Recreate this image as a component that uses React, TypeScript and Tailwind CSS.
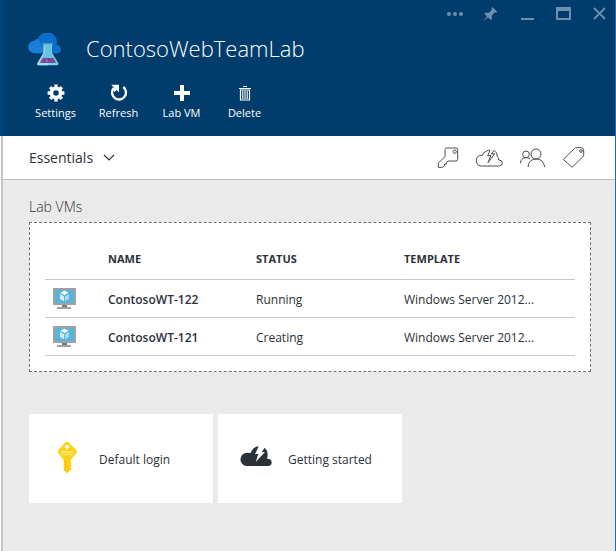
import React from "react";

function FlaskLogo() {
  return (
    <svg width="34" height="34" viewBox="86 98 102 102" aria-hidden="true">
      <path d="M106 159a17 17 0 0 1-1-38 14 14 0 0 1 12-6 28 28 0 0 1 53 20 12 12 0 0 1 3 24z" fill="#1c7ed6" />
      <path d="M117 113a28 28 0 0 1 53 22 12 12 0 0 1 3 24h-34z" fill="#0a6fc9" />
      <path d="M133 132h25v25l19 32q2 6-4 6h-55q-6 0-4-6l19-32z" fill="#7fd0e8" />
      <path d="M133 132h13v63h-28q-6 0-4-6l19-32z" fill="#a3dff0" />
      <path d="M130 129h30v6h-30z" fill="#59b4d9" />
      <path d="M136 135h20v23l17 29h-54l17-29z" fill="#6cc3e0" />
      <path d="M130 173h32l8 15h-48z" fill="#804998" />
      <circle cx="143" cy="182" r="3" fill="#a678b8" />
      <circle cx="149" cy="177" r="2" fill="#4b2467" />
    </svg>
  );
}

function GearIcon() {
  return (
    <svg width="18" height="18" viewBox="0 0 18 18" fill="none" stroke="#fff" aria-hidden="true">
      <circle cx="9" cy="9" r="4.6" strokeWidth="3.6" />
      <path d="M9 .6v3M9 14.400v3M.6 9h3M14.400 9h3M3.100 3.100l2 2M12.900 12.900l2 2M14.900 3.100l-2 2M5.100 12.900l-2 2" strokeWidth="3.400" />
    </svg>
  );
}

function RefreshIcon() {
  return (
    <svg width="18" height="18" viewBox="327 253 54 54" aria-hidden="true">
      <path d="M367 262a21 21 0 1 1-29 3" fill="none" stroke="#fff" strokeWidth="7" />
      <path d="M331 255h23v23l-7-7-7 6-6-7 5-6z" fill="#fff" />
    </svg>
  );
}

function PlusIcon() {
  return (
    <svg width="18" height="18" viewBox="0 0 18 18" aria-hidden="true">
      <path d="M7 1h4v6h6v4h-6v6H7v-6H1V7h6z" fill="#fff" />
    </svg>
  );
}

function TrashIcon() {
  return (
    <svg width="18" height="18" viewBox="0 0 18 18" fill="none" stroke="#fff" aria-hidden="true">
      <path d="M3 4.500h12M7 2.500h4" strokeWidth="1" />
      <path d="M4.500 6v10h9V6z" strokeWidth="1.200" />
      <path d="M6.800 7v8M9 7v8M11.200 7v8" strokeWidth="1.100" />
    </svg>
  );
}

const windowIcons = [
  {
    label: "More",
    icon: (
      <svg width="18" height="18" viewBox="0 0 18 18" fill="#6d8eac" aria-hidden="true">
        <circle cx="3" cy="9" r="2" />
        <circle cx="9" cy="9" r="2" />
        <circle cx="15" cy="9" r="2" />
      </svg>
    ),
  },
  {
    label: "Pin",
    icon: (
      <svg width="18" height="18" viewBox="156 14 54 54" fill="#6d8eac" aria-hidden="true">
        <path d="M187 20l15 14-4 3-4-1-9 10 1 9-4 4-8-8-14 12 11-15-8-8 4-3 10 0 9-9-2-4z" />
      </svg>
    ),
  },
  {
    label: "Minimize",
    icon: (
      <svg width="18" height="18" viewBox="0 0 18 18" fill="#6d8eac" aria-hidden="true">
        <path d="M3 13h13v2H3z" />
      </svg>
    ),
  },
  {
    label: "Maximize",
    icon: (
      <svg width="18" height="18" viewBox="0 0 18 18" fill="#6d8eac" fillRule="evenodd" aria-hidden="true">
        <path d="M2 2h15v13H2zM4 6v7h11V6z" />
      </svg>
    ),
  },
  {
    label: "Close",
    icon: (
      <svg width="18" height="18" viewBox="0 0 18 18" fill="none" stroke="#6d8eac" strokeWidth="1.800" aria-hidden="true">
        <path d="M4 3l11 11M15 3L4 14" />
      </svg>
    ),
  },
];

const commands = [
  { label: "Settings", icon: <GearIcon /> },
  { label: "Refresh", icon: <RefreshIcon /> },
  { label: "Lab VM", icon: <PlusIcon /> },
  { label: "Delete", icon: <TrashIcon /> },
];

const essentials = [
  {
    label: "Keys",
    icon: (
      <svg width="22" height="22" viewBox="48 50 66 66" fill="none" stroke="#4a4f55" strokeWidth="3" aria-hidden="true">
        <path d="M77 53h28q5 0 5 5v29q0 5-5 5H83l-7 4v5h-6v6l-6 4H52V98l20-19V58q0-5 5-5z" />
        <circle cx="101" cy="64" r="5" />
      </svg>
    ),
  },
  {
    label: "Quick start",
    icon: (
      <svg width="28" height="22" viewBox="165 49 84 66" fill="none" stroke="#4a4f55" strokeWidth="3" aria-hidden="true">
        <path d="M199 62q-10 3-12 12-18-1-18 16 0 15 14 16h55q9-1 9-9 0-9-11-9 1-6-4-10" />
        <path d="M199 62q6-5 11-3l-7 17 10-2-9 22 20-27-10 1 8-11q10 6 10 19" />
      </svg>
    ),
  },
  {
    label: "Users",
    icon: (
      <svg width="27" height="22" viewBox="294 50 81 66" fill="none" stroke="#4a4f55" strokeWidth="3" aria-hidden="true">
        <circle cx="315" cy="72" r="10" />
        <circle cx="345" cy="71" r="15" />
        <path d="M298 99q1-16 17-17 7 0 12 4M321 110q2-23 24-24t26 24" />
      </svg>
    ),
  },
  {
    label: "Tags",
    icon: (
      <svg width="23" height="22" viewBox="426 50 69 66" fill="none" stroke="#4a4f55" strokeWidth="3" aria-hidden="true">
        <path d="M430 87l33-32q3-3 7-3h14q7 0 7 8v13q0 4-3 7l-32 31z" />
        <circle cx="483" cy="62" r="4" />
      </svg>
    ),
  },
];

function MonitorIcon() {
  return (
    <svg className="block" width="24" height="22" viewBox="0 0 24 22" aria-hidden="true">
      <path d="M1 1h23v17H1z" fill="#a0a1a2" />
      <path d="M3 3h19v13H3z" fill="#59b4d9" />
      <path d="M10 18h5v2h2v1H8v-1h2z" fill="#7a7a7a" />
      <path d="M5 20h14v2H5z" fill="#a0a1a2" />
      <path d="M12.500 3.500l4 2.200-4 2.300-4-2.300z" fill="#fff" />
      <path d="M8 7l4 2.200v5L8 12z" fill="#d3ecf7" />
      <path d="M17 7l-4 2.200v5l4-2.200z" fill="#a6d9ef" />
    </svg>
  );
}

function YellowKey() {
  return (
    <svg width="34" height="34" viewBox="88 124 102 102" aria-hidden="true">
      <path
        fillRule="evenodd"
        d="M136 129q6-5 12 0l22 22q4 5 0 10l-17 20v5l3 3-3 4 3 5-3 5 3 5-14 13-10-9v-32l-16-19q-4-5 0-10zM142 135a6 6 0 1 0 .1 0z"
        fill="#fcd116"
      />
      <path d="M123 153h37v6h-37zM123 162h37v5h-37z" fill="#fee56c" />
      <path d="M136 183h4v29l-4-3z" fill="#ffb900" />
    </svg>
  );
}

function CloudBolt() {
  return (
    <svg width="34" height="34" viewBox="655 126 102 102" fill="#2b3138" aria-hidden="true">
      <path d="M681 201a20 20 0 0 1 3-40q7 0 9 1 8-20 24-20l-11 24 10-2-8 25 28-30-10 1 9-14q9 8 9 20 0 8-2 13 13-1 14 11 0 10-9 11z" />
    </svg>
  );
}

const vms = [
  { name: "ContosoWT-122", status: "Running", template: "Windows Server 2012..." },
  { name: "ContosoWT-121", status: "Creating", template: "Windows Server 2012..." },
];

const tiles = [
  { label: "Default login", icon: <YellowKey /> },
  { label: "Getting started", icon: <CloudBolt /> },
];

export default function App() {
  return (
    <div className="flex min-h-screen flex-col bg-white font-['Open_Sans','Noto_Sans',sans-serif] text-[#2b3138]">
      <header className="h-[136px] border-r border-l-3 border-r-[#1072bd] border-l-[#00457c] bg-[#003c6c] text-white">
        <div className="flex h-7 items-center justify-end gap-1">
          {windowIcons.map((w) => (
            <button key={w.label} type="button" aria-label={w.label} className="flex w-8 justify-center">
              {w.icon}
            </button>
          ))}
        </div>
        <div className="flex h-11 items-center gap-6 pl-[25px]">
          <FlaskLogo />
          <h1 className="pb-1 text-[22px] leading-8 font-light whitespace-nowrap">ContosoWebTeamLab</h1>
        </div>
        <nav className="flex pt-3 pl-[21px]">
          {commands.map((c) => (
            <button key={c.label} type="button" className="flex w-[63px] flex-col items-center gap-[3px] text-[11px] leading-4 whitespace-nowrap">
              {c.icon}
              {c.label}
            </button>
          ))}
        </nav>
      </header>

      <main className="ml-px flex-1 border-r border-l-2 border-r-[#1072bd] border-l-[#c3c4c6] bg-[#eaeaea]">
        <div className="flex h-11 items-center justify-between border-b border-[#bfbfc1] bg-white pr-[30px] pl-[26px]">
          <button type="button" className="flex items-center gap-2.5 text-sm">
            Essentials
            <svg width="12" height="8" viewBox="0 0 12 8" fill="none" stroke="#2b3138" strokeWidth="1.200" aria-hidden="true">
              <path d="M1 1l5 5 5-5" />
            </svg>
          </button>
          <div className="flex items-center gap-4">
            {essentials.map((e) => (
              <button key={e.label} type="button" aria-label={e.label}>
                {e.icon}
              </button>
            ))}
          </div>
        </div>

        <div className="pt-4 pr-6 pl-[26px]">
          <h2 className="text-sm leading-[22px] font-light">Lab VMs</h2>
          <section className="mt-1 border border-dashed border-[#707070] bg-white px-[15px] pt-4 pb-[15px]">
            <table className="w-full table-fixed border-collapse text-left">
              <thead>
                <tr className="h-10 border-b border-[#c8c8c8] text-[11px]">
                  <th className="w-[63px]" aria-label="Type" />
                  <th className="w-[148px] font-bold">NAME</th>
                  <th className="w-[148px] font-bold">STATUS</th>
                  <th className="font-bold">TEMPLATE</th>
                </tr>
              </thead>
              <tbody>
                {vms.map((vm) => (
                  <tr key={vm.name} className="h-[38px] border-b border-[#c8c8c8] text-xs">
                    <td className="pl-[7px]">
                      <MonitorIcon />
                    </td>
                    <td className="pt-1 font-semibold">{vm.name}</td>
                    <td className="pt-1">{vm.status}</td>
                    <td className="pt-1 whitespace-nowrap">{vm.template}</td>
                  </tr>
                ))}
              </tbody>
            </table>
          </section>

          <div className="mt-[42px] flex gap-[5px]">
            {tiles.map((t) => (
              <button key={t.label} type="button" className="flex h-[89px] w-[184px] items-center gap-4 bg-white pl-5 text-xs whitespace-nowrap">
                {t.icon}
                <span className="pt-1">{t.label}</span>
              </button>
            ))}
          </div>
        </div>
      </main>
    </div>
  );
}
